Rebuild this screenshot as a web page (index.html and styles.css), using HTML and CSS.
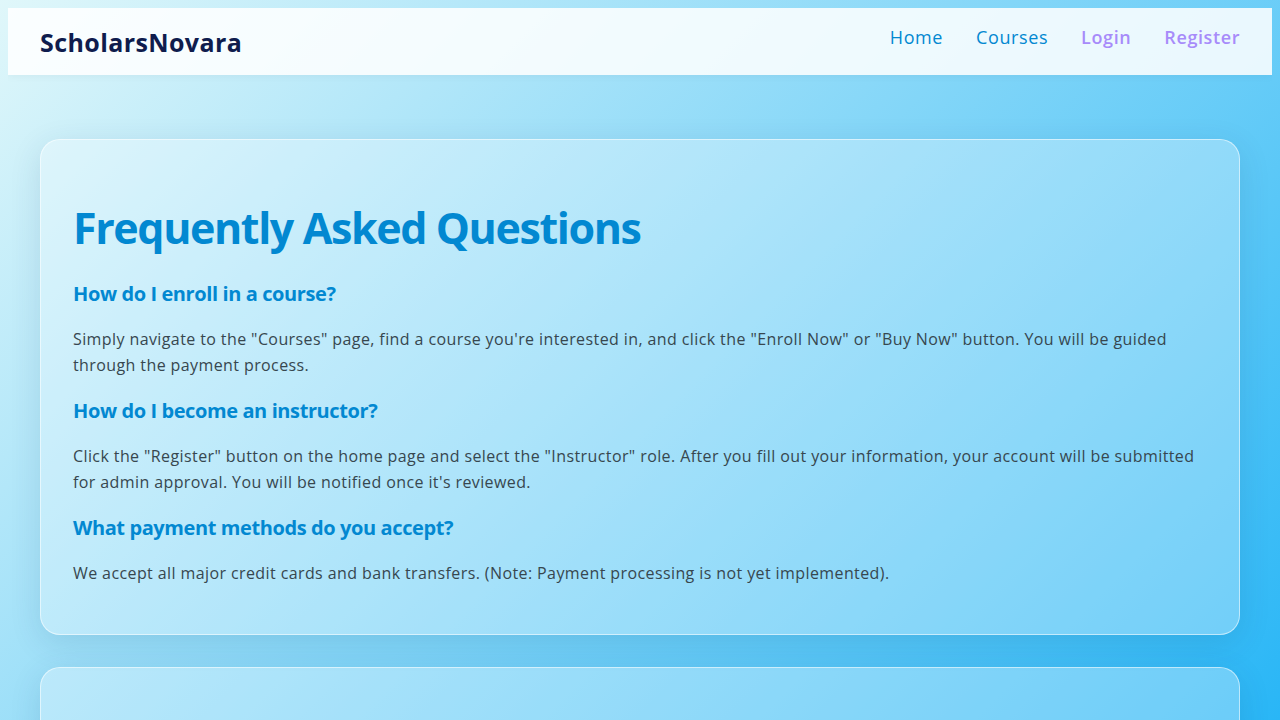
FILE: index.html
```html
<!DOCTYPE html>
<html lang="en">
<head>
<meta charset="utf-8">
<title>FAQ - ScholarsNovara</title>
<link rel="stylesheet" href="styles.css">
</head>
<body>
<header class="site-header">
  <div class="logo">ScholarsNovara</div>
  <nav class="nav">
    <a class="nav-link" href="#">Home</a>
    <a class="nav-link" href="#">Courses</a>
    <a class="nav-link nav-accent" href="#">Login</a>
    <a class="nav-link nav-accent" href="#">Register</a>
  </nav>
</header>
<main class="main">
  <section class="card">
    <h1 class="title">Frequently Asked Questions</h1>
    <h3 class="question">How do I enroll in a course?</h3>
    <p class="answer">Simply navigate to the "Courses" page, find a course you're interested in, and click the "Enroll Now" or "Buy Now" button. You will be guided through the payment process.</p>
    <h3 class="question">How do I become an instructor?</h3>
    <p class="answer">Click the "Register" button on the home page and select the "Instructor" role. After you fill out your information, your account will be submitted for admin approval. You will be notified once it's reviewed.</p>
    <h3 class="question">What payment methods do you accept?</h3>
    <p class="answer">We accept all major credit cards and bank transfers. (Note: Payment processing is not yet implemented).</p>
  </section>
  <section class="card card-lower"></section>
</main>
</body>
</html>
```
FILE: styles.css
```css
html {
  min-height: 100%;
}
body {
  margin: 8px;
  font-family: "Open Sans", "Inter", sans-serif;
  color: #37474f;
  background: linear-gradient(135deg, #e0f7fa 0%, #29b6f6 100%) fixed;
  min-height: 100vh;
}
.site-header {
  display: flex;
  justify-content: space-between;
  align-items: flex-start;
  height: 67px;
  box-sizing: border-box;
  padding: 0 32px;
  background: rgba(255, 255, 255, 0.86);
  box-shadow: 0 2px 8px rgba(0, 0, 0, 0.04);
}
.logo {
  margin-top: 18px;
  font-size: 25px;
  line-height: 32px;
  font-weight: 700;
  color: #0f1c4d;
  letter-spacing: 0.4px;
}
.nav {
  display: flex;
  gap: 33px;
  margin-top: 15px;
}
.nav-link {
  font-size: 18px;
  line-height: 28px;
  font-weight: 500;
  color: #0288d1;
  text-decoration: none;
  letter-spacing: 0.6px;
}
.nav-accent {
  font-weight: 600;
  color: #a78bfa;
}
.main {
  padding: 64px 32px 32px;
  display: flex;
  flex-direction: column;
  gap: 32px;
}
.card {
  padding: 32px;
  border-radius: 20px;
  background: rgba(255, 255, 255, 0.3);
  border: 1px solid rgba(255, 255, 255, 0.55);
  box-shadow: 0 8px 32px rgba(0, 60, 100, 0.12);
}
.card-lower {
  min-height: 200px;
}
.title {
  margin: 23px 0 16px;
  font-size: 43px;
  line-height: 66px;
  font-weight: 700;
  color: #0288d1;
  letter-spacing: -1.4px;
}
.question {
  margin: 18px 0 17px;
  font-size: 20px;
  line-height: 30px;
  font-weight: 700;
  color: #0288d1;
  letter-spacing: -0.4px;
}
.answer {
  margin: 16px 0;
  font-size: 16px;
  line-height: 26px;
  color: #37474f;
  letter-spacing: 0.4px;
}
```
